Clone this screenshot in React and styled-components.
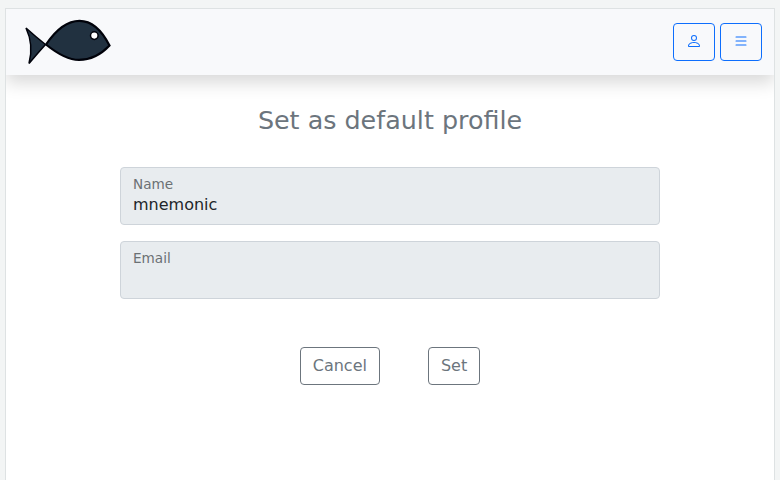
import React from "react";
import styled, { createGlobalStyle } from "styled-components";
import { BsPerson, BsList } from "react-icons/bs";

const GlobalStyle = createGlobalStyle`
  *, *::before, *::after { box-sizing: border-box; }
  html, body { height: 100%; }
  body {
    margin: 0;
    overflow: hidden;
    background: #f3f5f5;
    color: #212529;
    font: 400 16px/1.5 "DejaVu Sans", sans-serif;
  }
`;

const Page = styled.div`
  height: 100vh;
  padding: 8px 5px 0;
`;

const Panel = styled.main`
  height: 100%;
  overflow: hidden;
  border: 1px solid #dee2e3;
  border-bottom: 0;
  background: #fff;
`;

const Navbar = styled.header`
  display: flex;
  align-items: center;
  justify-content: space-between;
  height: 66px;
  padding: 0 12px 0 18px;
  background: #f8f9fb;
  box-shadow: 0 8px 16px rgba(0, 0, 0, 0.15);
`;

const Logo = styled.svg`
  display: block;
  width: 90px;
  height: 50px;
`;

const NavActions = styled.nav`
  display: flex;
  gap: 5px;
`;

const Button = styled.button`
  height: 38px;
  padding: 6px 12px;
  border: 1px solid ${({ $tone }) => ($tone === "primary" ? "#0d6efd" : "#6c757d")};
  border-radius: 4px;
  background: transparent;
  color: ${({ $tone }) => ($tone === "primary" ? "#0d6efd" : "#6c757d")};
  font: inherit;

  svg { vertical-align: -2px; }
`;

const Form = styled.form`
  display: flex;
  flex-direction: column;
  width: 540px;
  margin: 30px auto 0;
`;

const Title = styled.h3`
  margin: 0 0 31px;
  color: #6c757d;
  font-size: 25.4px;
  font-weight: 400;
  line-height: 31px;
  text-align: center;
`;

const Field = styled.label`
  display: flex;
  flex-direction: column;
  height: 58px;
  margin-bottom: 16px;
  padding: 6px 12px;
  border: 1px solid #ced4da;
  border-radius: 4px;
  background: #e8ecef;
`;

const FieldLabel = styled.span`
  color: #6b7074;
  font-size: 13.6px;
  line-height: 20px;
`;

const FieldInput = styled.input`
  width: 100%;
  height: 22px;
  padding: 0;
  border: 0;
  outline: 0;
  background: transparent;
  color: #212529;
  font: inherit;
  line-height: 22px;
`;

const Actions = styled.div`
  display: flex;
  justify-content: center;
  gap: 48px;
  margin-top: 32px;
`;

export default function App() {
  return (
    <Page>
      <GlobalStyle />
      <Panel>
        <Navbar>
          <Logo viewBox="24 17 90 50" aria-label="Fish">
            <g fill="#213140" stroke="#00020a" strokeWidth="2.2">
              <path d="M26 28Q36 37 45.5 44.5Q37 54 29 63.5Q34 45 26 28Z" strokeWidth="1.5" />
              <path d="M46 44.5Q62 20.8 79.5 20.8Q97 20.8 109.5 45.5Q96 59.9 79 59.9Q65 59.9 46 44.5Z" />
              <circle cx="94.3" cy="35.6" r="3.8" fill="#fff" strokeWidth="1.5" />
            </g>
          </Logo>
          <NavActions>
            <Button type="button" $tone="primary" aria-label="Profile"><BsPerson /></Button>
            <Button type="button" $tone="primary" aria-label="Menu"><BsList /></Button>
          </NavActions>
        </Navbar>
        <Form>
          <Title>Set as default profile</Title>
          <Field>
            <FieldLabel>Name</FieldLabel>
            <FieldInput readOnly value="mnemonic" />
          </Field>
          <Field>
            <FieldLabel>Email</FieldLabel>
            <FieldInput readOnly value="" />
          </Field>
          <Actions>
            <Button type="button">Cancel</Button>
            <Button type="button">Set</Button>
          </Actions>
        </Form>
      </Panel>
    </Page>
  );
}
